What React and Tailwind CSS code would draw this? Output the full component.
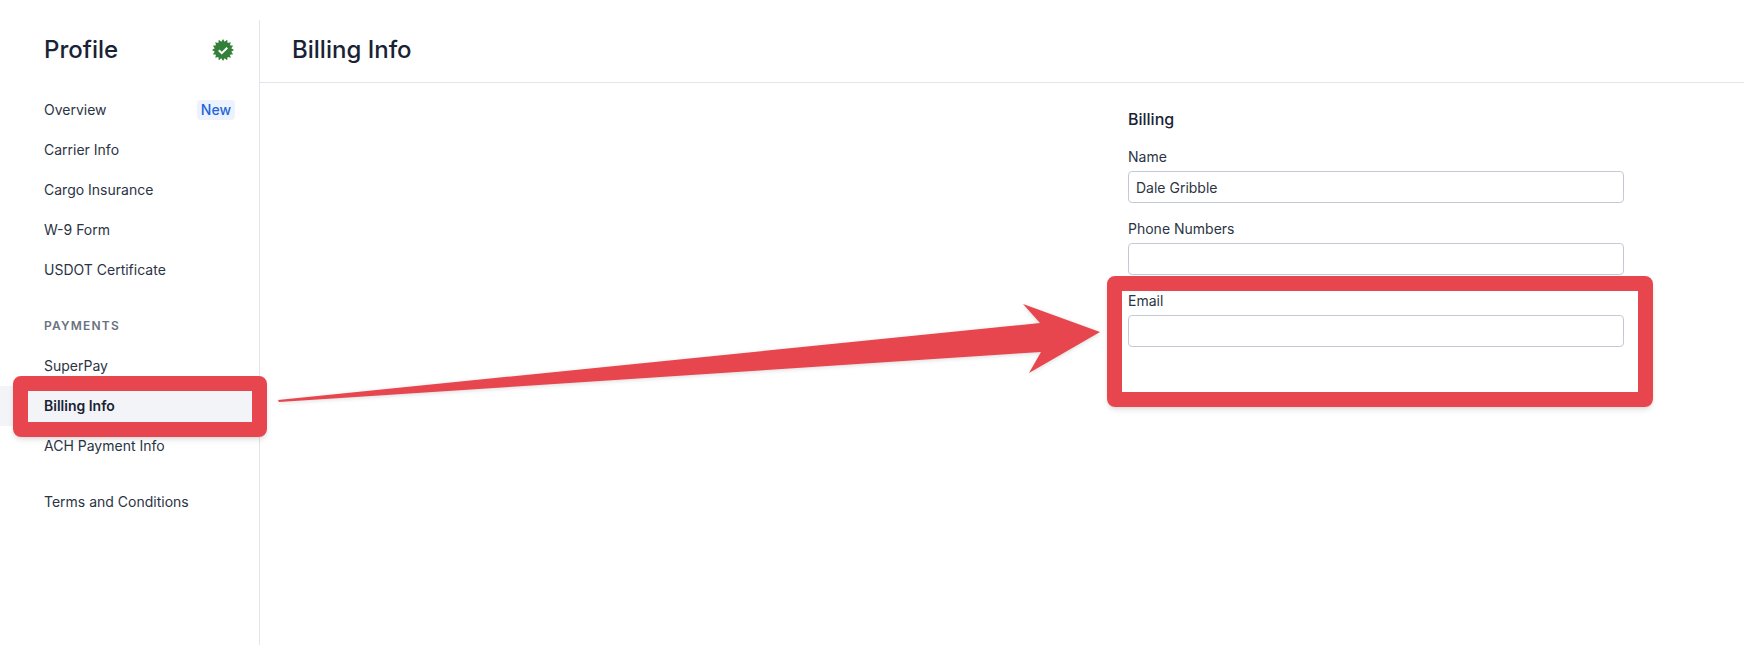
import React from "react";

const NavItem = ({ label, active, badge }) => (
  <div
    className={`flex h-10 items-center justify-between pl-11 pr-6 text-sm ${
      active ? "bg-[#f3f4f8] font-semibold text-[#192334]" : "text-[#2b3444]"
    }`}
  >
    <span>{label}</span>
    {badge && (
      <span className="rounded-[4px] bg-[#ecf3fe] px-1 text-sm leading-5 font-medium text-[#2563d9]">
        {badge}
      </span>
    )}
  </div>
);

const starPoints = Array.from({ length: 32 }, (_, i) => {
  const r = i % 2 === 0 ? 11 : 8.4;
  const a = (i * Math.PI) / 16;
  return `${(11 + r * Math.sin(a)).toFixed(2)},${(11 - r * Math.cos(a)).toFixed(2)}`;
}).join(" ");

const VerifiedBadge = () => (
  <svg width="22" height="22" viewBox="0 0 22 22">
    <polygon points={starPoints} fill="#34803a" />
    <path d="M6.8 11.2l2.9 2.9 5.6-5.4" fill="none" stroke="#fff" strokeWidth="2" />
  </svg>
);

const Field = ({ label, value, className }) => (
  <div className={className}>
    <label className="block text-sm leading-5 text-[#2b3444]">{label}</label>
    <input
      readOnly
      value={value || ""}
      className="mt-1 block h-8 w-full rounded-[4px] border border-[#c4cad5] px-[7px] text-sm text-[#2b3444]"
    />
  </div>
);

const Sidebar = () => (
  <aside className="w-[260px] shrink-0 border-r border-[#e1e5ec]">
    <div className="flex h-[60px] items-center justify-between pr-[25px] pl-11">
      <h1 className="text-2xl font-medium text-[#192334]">Profile</h1>
      <VerifiedBadge />
    </div>
    <div className="pt-2.5">
      <NavItem label="Overview" badge="New" />
      <NavItem label="Carrier Info" />
      <NavItem label="Cargo Insurance" />
      <NavItem label="W-9 Form" />
      <NavItem label="USDOT Certificate" />
    </div>
    <div className="mt-4 flex h-10 items-center pl-11 text-xs font-semibold tracking-[0.1em] text-[#6a7280]">
      PAYMENTS
    </div>
    <NavItem label="SuperPay" />
    <NavItem label="Billing Info" active />
    <NavItem label="ACH Payment Info" />
    <div className="mt-4">
      <NavItem label="Terms and Conditions" />
    </div>
  </aside>
);

// red arrow and boxes drawn on top of the screenshot
const Annotations = () => (
  <>
    <div className="absolute top-[376px] left-[13px] h-[61px] w-[254px] rounded-lg border-[15px] border-[#e7464e] shadow-md" />
    <div className="absolute top-[276px] left-[1107px] h-[131px] w-[546px] rounded-lg border-[15px] border-[#e7464e] shadow-md" />
    <svg className="absolute top-0 left-0 drop-shadow-sm" width="1744" height="665">
      <polygon
        points="278,400 1040,323 1023,304 1100,332 1029,373 1041,352 279,402"
        fill="#e7464e"
      />
    </svg>
  </>
);

export default function App() {
  return (
    <div className="relative flex h-[665px] bg-white py-5 font-['Inter',sans-serif]">
      <Sidebar />
      <main className="flex-1">
        <header className="flex h-[63px] items-center border-b border-[#e1e5ec] pb-0.5 pl-8">
          <h2 className="text-2xl font-medium text-[#192334]">Billing Info</h2>
        </header>
        <div className="ml-[868px] w-[496px] pt-[26px]">
          <h3 className="text-base leading-5 font-medium text-[#192334]">Billing</h3>
          <Field label="Name" value="Dale Gribble" className="mt-[18px]" />
          <Field label="Phone Numbers" className="mt-4" />
          <Field label="Email" className="mt-4" />
        </div>
      </main>
      <Annotations />
    </div>
  );
}
